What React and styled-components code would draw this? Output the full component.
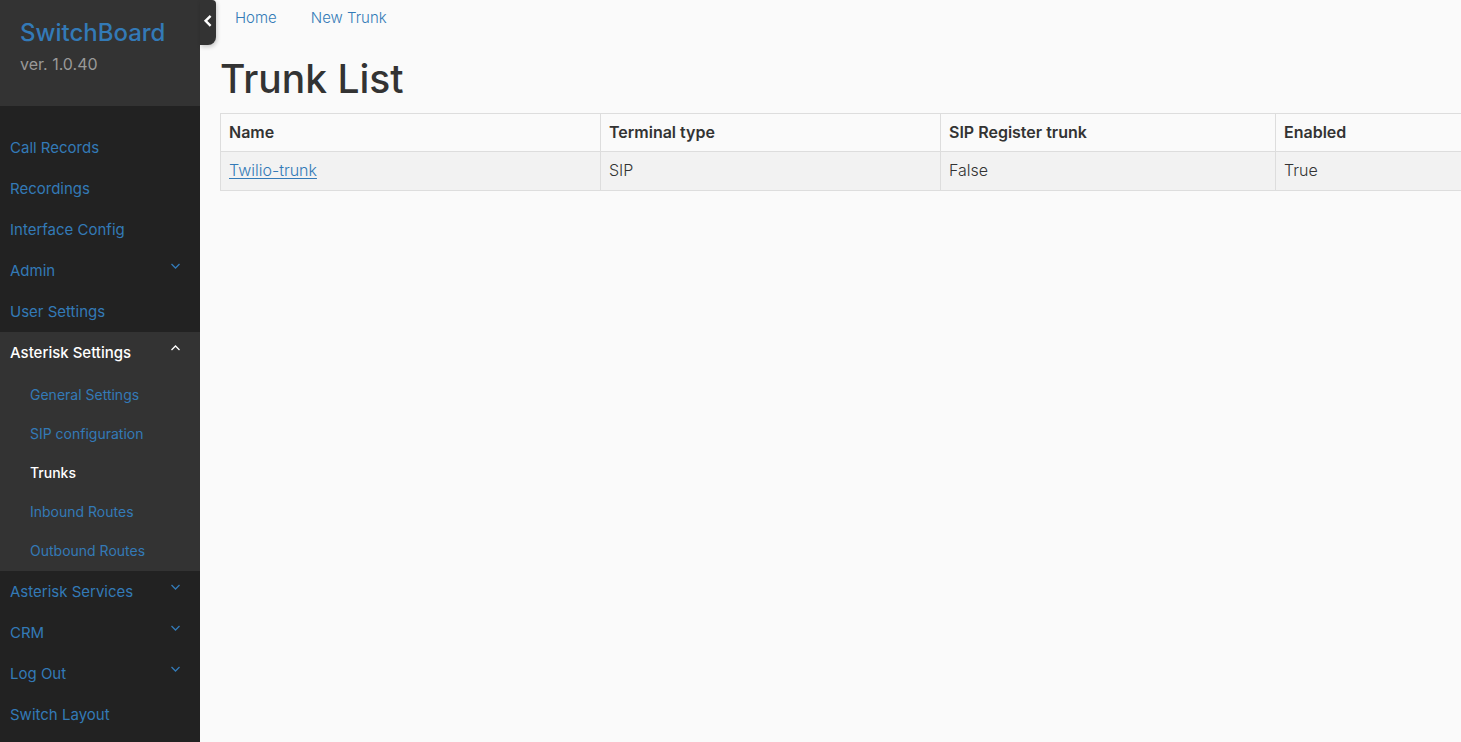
import React from "react";
import styled, { createGlobalStyle } from "styled-components";

const GlobalStyle = createGlobalStyle`
  *, *::before, *::after { box-sizing: border-box; }
  body {
    margin: 0;
    background: #fafafa;
    color: #333;
    font-family: Inter, sans-serif;
    font-size: 15px;
    font-weight: 300;
    line-height: 21px;
  }
`;

const Layout = styled.div`
  display: flex;
  min-height: 100vh;
  overflow-x: hidden;
`;

const Sidebar = styled.aside`
  position: relative;
  flex: 0 0 200px;
  background: #222;
`;

const Brand = styled.header`
  height: 106px;
  padding: 16px 20px;
  background: #333;
`;

const BrandLink = styled.a`
  display: block;
  font-size: 24px;
  font-weight: 500;
  line-height: 34px;
  color: #337ab7;
  text-decoration: none;
`;

const Version = styled.p`
  margin: 0;
  font-size: 16px;
  font-weight: 400;
  line-height: 28px;
  color: #999;
`;

const CollapseButton = styled.button`
  position: absolute;
  top: 0;
  left: 100%;
  display: flex;
  align-items: center;
  justify-content: center;
  width: 16px;
  height: 45px;
  padding: 0 0 3px;
  border: 0;
  border-radius: 0 4px 8px 0;
  background: #333;
  color: #fff;
  box-shadow: 1px 2px 4px rgba(0, 0, 0, 0.2);
  cursor: pointer;
`;

const Menu = styled.ul`
  margin: 0;
  padding: 21px 0 0;
  list-style: none;
`;

const MenuItem = styled.li`
  background: ${(p) => (p.$open ? "#333" : "transparent")};
`;

const MenuLink = styled.a`
  display: block;
  padding: 10px;
  color: #337ab7;
  font-weight: 400;
  text-decoration: none;
`;

const MenuToggle = styled.button`
  display: flex;
  justify-content: space-between;
  align-items: flex-start;
  width: 100%;
  padding: 10px 20px 10px 10px;
  border: 0;
  background: none;
  color: ${(p) => (p.$open ? "#fff" : "#337ab7")};
  font: inherit;
  font-weight: ${(p) => (p.$open ? 500 : 400)};
  text-align: left;
  cursor: pointer;
`;

const Submenu = styled.ul`
  margin: 0;
  padding: 2px 0 1px;
  list-style: none;
`;

const SubmenuLink = styled.a`
  display: block;
  padding: 10px 10px 10px 30px;
  color: ${(p) => (p.$active ? "#fff" : "#337ab7")};
  font-size: 14px;
  font-weight: ${(p) => (p.$active ? 500 : 400)};
  line-height: 19px;
  text-decoration: none;
`;

const Main = styled.main`
  flex: 0 0 100%;
  padding: 0 20px;
`;

const TopNav = styled.nav`
  display: flex;
  gap: 34px;
  padding: 7px 15px;
`;

const TopLink = styled.a`
  color: #337ab7;
  text-decoration: none;
`;

const Title = styled.h1`
  margin: 20px 0 10px;
  font-size: 39px;
  font-weight: 500;
  line-height: 48px;
`;

const Table = styled.table`
  width: 100%;
  table-layout: fixed;
  border-collapse: collapse;
  font-size: 16px;
`;

const Column = styled.col`
  width: ${(p) => p.$width};
`;

const HeadCell = styled.th`
  padding: 8px;
  border: 1px solid #ddd;
  font-weight: 600;
  text-align: left;
`;

const Cell = styled.td`
  padding: 8px 8px 9px;
  border: 1px solid #ddd;
  background: #f2f2f2;
`;

const CellLink = styled.a`
  color: #337ab7;
  text-decoration: underline;
  text-underline-offset: 2px;
`;

const Chevron = ({ up }) => (
  <svg width="9" height="10" viewBox="0 0 9 10" fill="none" stroke="currentColor" strokeWidth="1.3" aria-hidden="true">
    <path d={up ? "M.5 8 4.5 4 8.5 8" : "M.5 4 4.5 8 8.5 4"} />
  </svg>
);

const menu = [
  { label: "Call Records" },
  { label: "Recordings" },
  { label: "Interface Config" },
  { label: "Admin", toggle: true },
  { label: "User Settings" },
  {
    label: "Asterisk Settings",
    toggle: true,
    children: ["General Settings", "SIP configuration", "Trunks", "Inbound Routes", "Outbound Routes"],
  },
  { label: "Asterisk Services", toggle: true },
  { label: "CRM", toggle: true },
  { label: "Log Out", toggle: true },
  { label: "Switch Layout" },
];

const trunks = [{ name: "Twilio-trunk", type: "SIP", register: "False", enabled: "True" }];

export default function App() {
  return (
    <>
      <GlobalStyle />
      <Layout>
        <Sidebar>
          <Brand>
            <BrandLink href="#">SwitchBoard</BrandLink>
            <Version>ver. 1.0.40</Version>
          </Brand>
          <CollapseButton type="button" aria-label="Collapse sidebar">
            <svg width="10" height="14" viewBox="0 0 10 14" fill="none" stroke="currentColor" strokeWidth="2.4" aria-hidden="true">
              <path d="M7.6 1.8 2.6 6.8 7.6 11.8" />
            </svg>
          </CollapseButton>
          <nav aria-label="Main menu">
            <Menu>
              {menu.map((item) => (
                <MenuItem key={item.label} $open={!!item.children}>
                  {item.toggle ? (
                    <MenuToggle type="button" $open={!!item.children} aria-expanded={!!item.children}>
                      {item.label}
                      <Chevron up={!!item.children} />
                    </MenuToggle>
                  ) : (
                    <MenuLink href="#">{item.label}</MenuLink>
                  )}
                  {item.children && (
                    <Submenu>
                      {item.children.map((child) => (
                        <li key={child}>
                          <SubmenuLink href="#" $active={child === "Trunks"}>
                            {child}
                          </SubmenuLink>
                        </li>
                      ))}
                    </Submenu>
                  )}
                </MenuItem>
              ))}
            </Menu>
          </nav>
        </Sidebar>
        <Main>
          <TopNav aria-label="Trunk actions">
            <TopLink href="#">Home</TopLink>
            <TopLink href="#">New Trunk</TopLink>
          </TopNav>
          <Title>Trunk List</Title>
          <Table>
            <colgroup>
              <Column $width="380px" />
              <Column $width="340px" />
              <Column $width="335px" />
              <Column $width="auto" />
            </colgroup>
            <thead>
              <tr>
                <HeadCell scope="col">Name</HeadCell>
                <HeadCell scope="col">Terminal type</HeadCell>
                <HeadCell scope="col">SIP Register trunk</HeadCell>
                <HeadCell scope="col">Enabled</HeadCell>
              </tr>
            </thead>
            <tbody>
              {trunks.map((trunk) => (
                <tr key={trunk.name}>
                  <Cell>
                    <CellLink href="#">{trunk.name}</CellLink>
                  </Cell>
                  <Cell>{trunk.type}</Cell>
                  <Cell>{trunk.register}</Cell>
                  <Cell>{trunk.enabled}</Cell>
                </tr>
              ))}
            </tbody>
          </Table>
        </Main>
      </Layout>
    </>
  );
}
